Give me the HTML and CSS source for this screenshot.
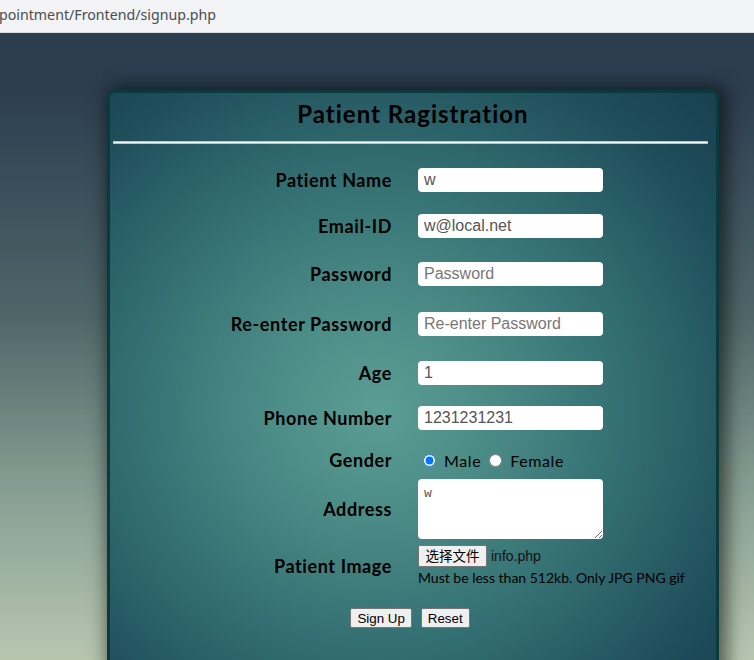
FILE: index.html
```html
<!DOCTYPE html>
<html>
<head>
<meta charset="utf-8">
<title>Patient Registration</title>
<link rel="stylesheet" href="styles.css">
</head>
<body>
<div class="chrome">
  <span class="url">pointment/Frontend/signup.php</span>
</div>
<div class="page">
  <form class="card">
    <h2 class="title">Patient Ragistration</h2>
    <hr class="rule">
    <div class="grid">
      <label class="lbl">Patient Name</label>
      <div class="field"><input class="txt" type="text" value="w"></div>

      <label class="lbl">Email-ID</label>
      <div class="field"><input class="txt" type="text" value="w@local.net"></div>

      <label class="lbl">Password</label>
      <div class="field"><input class="txt" type="password" placeholder="Password"></div>

      <label class="lbl">Re-enter Password</label>
      <div class="field"><input class="txt" type="password" placeholder="Re-enter Password"></div>

      <label class="lbl">Age</label>
      <div class="field"><input class="txt" type="text" value="1"></div>

      <label class="lbl">Phone Number</label>
      <div class="field"><input class="txt" type="text" value="1231231231"></div>

      <label class="lbl">Gender</label>
      <div class="field radios">
        <input class="radio" type="radio" name="g" checked><span class="rtext first">Male</span>
        <input class="radio" type="radio" name="g"><span class="rtext">Female</span>
      </div>

      <label class="lbl">Address</label>
      <div class="field"><textarea class="area">w</textarea></div>

      <label class="lbl">Patient Image</label>
      <div class="field file">
        <div class="filerow"><span class="filebtn">选择文件</span><span class="fname">info.php</span></div>
        <div class="hint">Must be less than 512kb. Only JPG PNG gif</div>
      </div>
    </div>
    <div class="actions">
      <button class="btn" type="button">Sign Up</button>
      <button class="btn" type="button">Reset</button>
    </div>
  </form>
</div>
</body>
</html>
```
FILE: styles.css
```css
html, body {
  margin: 0;
  padding: 0;
}
body {
  width: 754px;
  height: 660px;
  overflow: hidden;
}
.chrome {
  height: 32px;
  background: #f1f3f4;
  border-bottom: 1px solid #dcdde0;
  display: flex;
  align-items: center;
}
.url {
  font-family: "Noto Sans", "Open Sans", sans-serif;
  font-size: 14.2px;
  color: #4a4d52;
  margin-left: -1px;
  margin-top: -4px;
}
.page {
  height: 627px;
  background: linear-gradient(to bottom, #2b3d4f 0%, #2c3e50 9%, #4e6668 45%, #8aa295 75%, #b8c6b0 100%);
  padding-top: 57px;
  padding-left: 107px;
  box-sizing: border-box;
  overflow: hidden;
}
.card {
  width: 612px;
  height: 640px;
  box-sizing: border-box;
  border: 3px solid #0a3a3b;
  border-radius: 8px;
  background: radial-gradient(ellipse 82% 75% at 44% 50%, #5b9e94 0%, #4c8c87 22%, #336f72 50%, #1f4d5a 78%, #163c4e 100%);
  box-shadow: 4px 0 18px 4px rgba(0, 0, 0, 0.55);
  padding-top: 6px;
}
.title {
  margin: 0;
  text-align: center;
  font-family: "Lato", "DejaVu Sans", sans-serif;
  font-weight: bold;
  font-size: 24px;
  line-height: 30px;
  color: #000;
  letter-spacing: 1px;
}
.rule {
  margin: 12px 8px 0 3px;
  height: 1px;
  border: 1px solid #b9c4c6;
  background: #f4f8f8;
}
.grid {
  margin-top: 13px;
  display: grid;
  grid-template-columns: 282px 185px;
  grid-template-rows: 45px 47px 50px 50px 47px 43px 42px 56px 57px;
  column-gap: 26px;
  align-items: center;
}
.lbl {
  text-align: right;
  font-family: "Lato", "DejaVu Sans", sans-serif;
  font-weight: bold;
  font-size: 18px;
  color: #000;
  letter-spacing: 0.6px;
}
.field {
  display: flex;
  align-items: center;
}
.txt {
  width: 185px;
  height: 24px;
  box-sizing: border-box;
  border: none;
  border-radius: 4px;
  padding: 0 6px;
  background: #fff;
  font-family: "Liberation Sans", Arial, sans-serif;
  font-size: 16px;
  color: #555;
  outline: none;
}
.txt::placeholder {
  color: #777;
}
.radios {
  font-family: "Lato", "DejaVu Sans", sans-serif;
  font-size: 16px;
  color: #000;
}
.radio {
  margin: 0 8px 0 5px;
  width: 13px;
  height: 13px;
}
.rtext {
  letter-spacing: 0.6px;
}
.rtext.first {
  margin-right: 3px;
}
.area {
  width: 185px;
  height: 60px;
  box-sizing: border-box;
  border: none;
  border-radius: 4px;
  padding: 7px 6px;
  background: #fff;
  font-family: "Liberation Mono", monospace;
  font-size: 13px;
  color: #555;
  resize: both;
  outline: none;
}
.file {
  flex-direction: column;
  align-items: flex-start;
}
.filerow {
  display: flex;
  align-items: center;
  gap: 4px;
}
.filebtn {
  display: inline-block;
  width: 69px;
  height: 22px;
  box-sizing: border-box;
  border: 1px solid #767676;
  border-radius: 2px;
  background: #efefef;
  text-align: center;
  font-family: "Noto Sans CJK SC", sans-serif;
  font-size: 13.5px;
  line-height: 19px;
  color: #000;
}
.fname {
  font-family: "Liberation Sans", Arial, sans-serif;
  font-size: 14px;
  color: #111;
}
.hint {
  margin-top: 2px;
  font-family: "Lato", "DejaVu Sans", sans-serif;
  font-size: 14px;
  color: #000;
  white-space: nowrap;
  letter-spacing: 0;
}
.actions {
  margin-top: 14px;
  display: flex;
  justify-content: center;
  gap: 9px;
  padding-right: 6px;
}
.btn {
  height: 20px;
  padding: 0 6px;
  border: 1px solid #767676;
  border-radius: 2px;
  background: #efefef;
  font-family: "Liberation Sans", Arial, sans-serif;
  font-size: 13.33px;
  color: #000;
}
```
